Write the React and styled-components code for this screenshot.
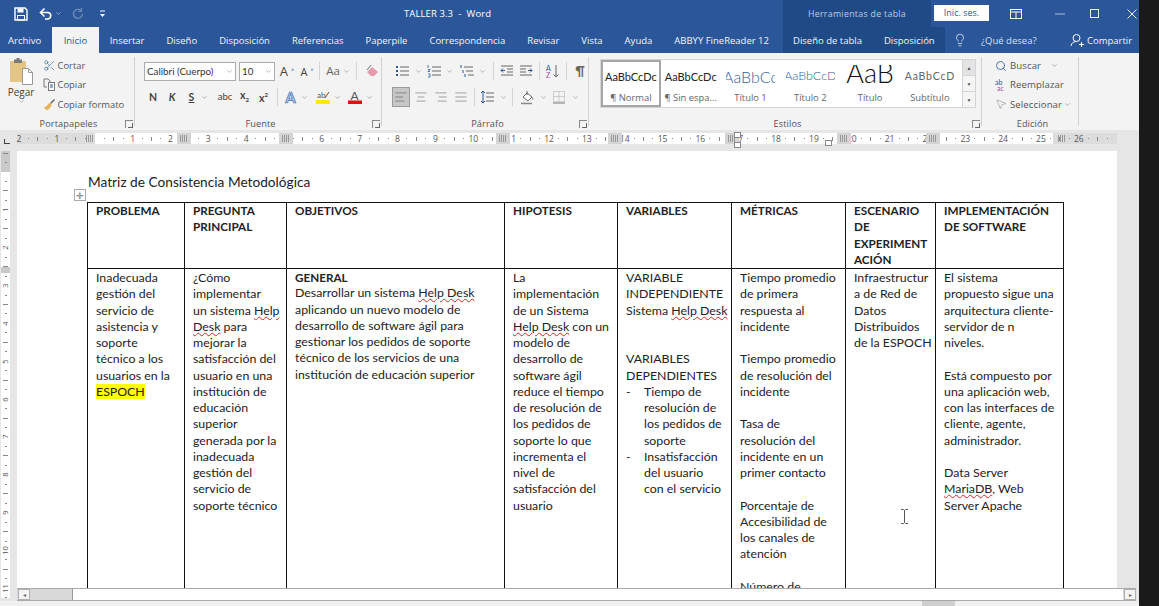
import React from 'react';
import styled, { createGlobalStyle } from 'styled-components';
import { ChevronDown, Scissors, AlignLeft, AlignCenter, AlignRight, AlignJustify, Lightbulb, Search, MousePointer2 } from 'lucide-react';

const Global = createGlobalStyle`
  html, body { margin: 0; padding: 0; height: 100%; background: #1a1a1a; overflow: hidden; }
  #root { height: 100%; }
  * { box-sizing: border-box; }
`;
const UI = `"Open Sans", "Noto Sans", sans-serif`;
const DOC = `Lato, "Liberation Sans", sans-serif`;

const Screen = styled.div`display:flex;width:1159px;height:606px;background:#1a1a1a;overflow:hidden;`;
const Word = styled.div`display:flex;flex-direction:column;width:1139px;height:606px;background:#e6e6e6;`;

/* title bar */
const TitleBar = styled.div`display:flex;align-items:center;height:27px;background:#2b579a;color:#fff;font:9.5px ${UI};flex:none;`;
const Qat = styled.div`display:flex;align-items:center;width:404px;flex:none;padding-left:14px;`;
const QatBtn = styled.span`display:flex;align-items:center;justify-content:center;width:${p=>p.$w||14}px;margin-right:${p=>p.$mr||0}px;opacity:${p=>p.$dim?.3:1};`;
const DocName = styled.div`width:379px;flex:none;letter-spacing:.1px;`;
const ContextHead = styled.div`width:148px;height:27px;flex:none;background:#204a85;color:#b9cbe6;display:flex;align-items:center;justify-content:center;font-size:8.8px;letter-spacing:.3px;`;
const SignIn = styled.div`width:55px;height:16px;margin:0 0 2px 3px;background:#fff;color:#2b579a;display:flex;align-items:center;justify-content:center;font-size:9px;flex:none;`;
const WinBtn = styled.span`display:flex;align-items:center;justify-content:center;width:${p=>p.$w}px;flex:none;`;

/* tabs */
const TabRow = styled.div`display:flex;align-items:stretch;height:26px;background:#2b579a;color:#f1f4f9;font:9.5px ${UI};flex:none;`;
const MainTabs = styled.div`display:flex;width:783px;flex:none;`;
const Tab = styled.div`display:flex;align-items:center;padding:0 ${p=>p.$px??11}px 0 ${p=>p.$pl??p.$px??11}px;white-space:nowrap;flex:none;
  ${p=>p.$active?'background:#f3f3f3;color:#2b579a;':''}`;
const ContextTabs = styled.div`display:flex;width:162px;flex:none;background:#204a85;padding-left:10px;gap:22px;align-items:center;`;
const TabText = styled.span`white-space:nowrap;`;
const Help = styled.div`display:flex;align-items:center;gap:14px;padding-left:8px;width:125px;flex:none;color:#d5e0f0;`;
const Share = styled.div`display:flex;align-items:center;gap:3px;flex:none;`;

/* ribbon */
const Ribbon = styled.div`display:flex;height:77px;background:#f3f3f3;flex:none;color:#444;font:9.5px ${UI};`;
const Group = styled.section`position:relative;display:flex;flex-direction:column;width:${p=>p.$w}px;flex:none;`;
const GroupBody = styled.div`flex:1;display:flex;min-height:0;position:relative;&::after{content:'';position:absolute;right:2px;top:4px;bottom:-8px;width:1px;background:#d2d2d2;}`;
const GroupLabel = styled.div`height:11px;line-height:11px;text-align:center;font-size:9.2px;color:#555;letter-spacing:.1px;margin-bottom:1px;`;
const Launcher = styled.span`position:absolute;right:4px;bottom:2px;width:8px;height:8px;border:1px solid #888;border-width:1px 0 0 1px;&::after{content:'';position:absolute;right:0;bottom:0;width:4px;height:4px;border-right:1px solid #666;border-bottom:1px solid #666;}`;
const PasteBtn = styled.div`width:42px;display:flex;flex-direction:column;align-items:center;padding-top:5px;font-size:10px;color:#444;flex:none;`;
const PasteLabel = styled.span`margin-top:1px;line-height:12px;`;
const ClipList = styled.div`display:flex;flex-direction:column;padding-top:3px;`;
const PadList = styled(ClipList)`padding-left:10px;`;
const ClipRow = styled.div`display:flex;align-items:center;gap:1.5px;height:19.3px;white-space:nowrap;color:#555;font-size:9.4px;`;
const ClipIcon = styled.span`display:flex;width:14px;justify-content:center;`;
const Stack = styled.div`display:flex;flex-direction:column;padding:${p=>p.$pt??8}px 0 0 ${p=>p.$pl||0}px;gap:${p=>p.$gap??5}px;`;
const Row = styled.div`display:flex;align-items:center;height:20px;`;
const Combo = styled.div`display:flex;align-items:center;justify-content:space-between;width:${p=>p.$w}px;height:19px;margin-right:${p=>p.$mr||0}px;background:#fff;border:1px solid #ababab;padding:0 2px 0 2px;font:9.8px ${DOC};color:#333;white-space:nowrap;flex:none;overflow:hidden;`;
const Tool = styled.span`display:flex;align-items:center;justify-content:center;gap:${p=>p.$gap??3}px;width:${p=>p.$w||20}px;height:${p=>p.$h||20}px;margin-left:${p=>p.$ml||0}px;flex:none;color:#555;font-family:${DOC};${p=>p.$on?'background:#c6c6c6;border:1px solid #9a9a9a;':''}`;
const Glyph = styled.span`font:${p=>p.$b?'700':'400'} ${p=>p.$s||10}px/1 ${p=>p.$f||DOC};color:${p=>p.$c||'#444'};${p=>p.$i?'font-style:italic;':''}${p=>p.$u?'text-decoration:underline;':''}`;
const OutlineA = styled(Glyph)`-webkit-text-stroke:.7px #3f74b5;`;
const Sub = styled.span`font-size:6px;vertical-align:${p=>p.$up?'super':'sub'};`;
const VSep = styled.span`display:block;width:1px;height:18px;background:#d4d4d4;flex:none;margin:0 ${p=>p.$mx??2}px;`;
const Chev = styled(ChevronDown).attrs({ size: 7, strokeWidth: 1.6 })`color:#666;flex:none;margin-left:${p=>p.$ml||0}px;`;
const Gallery = styled.div`display:flex;margin:6px 0 0 9px;width:376px;height:49px;background:#fff;border:1px solid #d4d4d4;flex:none;`;
const StyleItem = styled.div`display:flex;flex-direction:column;align-items:center;width:59.8px;flex:none;overflow:hidden;${p=>p.$sel?'border:2px solid #a6a6a6;box-shadow:inset 0 0 0 1px #fff;':'padding:2px 0;'}`;
const Preview = styled.div`height:29px;display:flex;align-items:center;justify-content:center;width:${p=>p.$clip||53}px;overflow:hidden;white-space:nowrap;font:${p=>p.$w||400} ${p=>p.$s||11}px/1 ${DOC};color:${p=>p.$c||'#222'};letter-spacing:${p=>p.$ls||0}px;
  ${p=>p.$big?'align-items:flex-end;height:21px;margin:3px 0 5px;':''}`;
const StyleName = styled.div`font-size:9.4px;line-height:14px;color:#666;white-space:nowrap;`;
const GalleryScroll = styled.div`display:flex;flex-direction:column;width:13px;margin-left:auto;border-left:1px solid #d4d4d4;`;
const ScrollCell = styled.span`flex:1;display:flex;align-items:center;justify-content:center;background:${p=>p.$dim?'#e3e3e3':'#f5f5f5'};border-bottom:1px solid #d4d4d4;font-size:5px;color:#555;&:last-child{border-bottom:0;}`;
const EditRow = styled.div`display:flex;align-items:center;gap:2px;height:19.3px;color:#555;white-space:nowrap;font-size:9.6px;letter-spacing:.1px;`;

/* ruler */
const RulerBar = styled.div`position:relative;height:21px;flex:none;background:#e6e6e6;`;
const CornerTab = styled.span`position:absolute;left:4px;top:9px;width:6px;height:5px;border-left:1.5px solid #444;border-bottom:1.5px solid #444;`;
const RulerTrack = styled.div`position:absolute;left:17px;top:3px;width:1100px;height:11px;background:#fff;overflow:visible;`;
const RulerShade = styled.span`position:absolute;top:0;bottom:0;left:${p=>p.$l}px;width:${p=>p.$w}px;background:${p=>p.$c||'#dcdcdc'};`;
const RulerGrip = styled.span`position:absolute;top:2px;height:7px;left:${p=>p.$l}px;width:7px;background:repeating-linear-gradient(90deg,#999 0 1px,transparent 1px 2px);`;
const RulerCells = styled.div`position:absolute;left:-2.7px;top:0;display:flex;height:11px;`;
const RulerCell = styled.span`display:grid;grid-template-columns:repeat(4,1fr);align-items:center;justify-items:center;width:37.85px;flex:none;font:8.5px ${UI};color:#555;`;
const RulerNum = styled.span`white-space:nowrap;line-height:11px;`;
const Dot = styled.i`display:block;width:${p=>p.$wd||1}px;height:${p=>p.$h||1}px;background:#888;`;
const Indent = styled.span`position:absolute;left:${p=>p.$l}px;top:${p=>p.$t}px;width:7px;height:${p=>p.$h}px;background:#fff;border:1px solid #888;`;

/* document */
const DocArea = styled.div`display:flex;flex:1;min-height:0;overflow:hidden;`;
const VRuler = styled.div`width:17px;flex:none;overflow:hidden;padding:0 7px 3px 1px;`;
const VTrack = styled.div`position:relative;height:100%;background:#fff;overflow:hidden;`;
const VShade = styled.span`position:absolute;left:0;right:0;top:${p=>p.$t}px;height:${p=>p.$h}px;background:#c9c9c9;`;
const VCells = styled.div`position:absolute;left:0;top:-21.55px;width:100%;display:flex;flex-direction:column;`;
const VCell = styled.span`height:37.85px;display:grid;grid-template-rows:repeat(4,1fr);align-items:center;justify-items:center;font:7.5px ${UI};color:#555;flex:none;`;
const VNum = styled.span`transform:rotate(-90deg);line-height:9px;white-space:nowrap;`;
const DocColumn = styled.div`display:flex;flex-direction:column;flex:1;min-width:0;`;
const Page = styled.div`position:relative;width:1100px;flex:1;min-height:0;background:#fff;padding:23px 0 0 70px;overflow:hidden;font:12.35px/16.25px ${DOC};color:#222;`;
const DocTitle = styled.div`font-size:13.7px;line-height:16px;margin:0 0 12px 1px;`;
const Grid = styled.table`position:relative;border-collapse:collapse;table-layout:fixed;width:976px;`;
const HeadRow = styled.tr`height:66px;`;
const BodyRow = styled.tr`height:420px;`;
const Cell = styled.td`border:1px solid #111;vertical-align:top;padding:1px 0 0 8px;overflow:hidden;`;
const HeadCell = styled(Cell)`padding-top:0;`;
const BoldLine = styled.div`font-weight:700;font-size:11.7px;white-space:nowrap;&:first-child{margin-top:-1px;}`;
const Line = styled.div`white-space:nowrap;min-height:16.25px;`;
const ListLine = styled.div`white-space:nowrap;display:flex;height:16.25px;`;
const Dash = styled.span`width:18px;flex:none;`;
const Spell = styled.span`text-decoration:underline wavy #d22;text-decoration-thickness:1px;text-underline-offset:1px;`;
const Mark = styled.span`background:#ffff00;`;
const MoveHandle = styled.span`position:absolute;left:57px;top:38px;width:12px;height:12px;border:1px solid #aaa;display:flex;align-items:center;justify-content:center;color:#666;font:9px/1 ${UI};background:#fff;`;
const IBeam = styled.span`position:absolute;left:883px;top:358px;color:#555;`;

/* scrollbar + status */
const HScroll = styled.div`display:flex;align-items:center;width:1119px;height:13px;flex:none;background:#d9d9d9;border-top:1px solid #a9a9a9;border-bottom:1px solid #a9a9a9;`;
const ArrowBtn = styled.span`display:flex;align-items:center;justify-content:center;width:12px;height:11px;margin:0 1px;background:#f5f5f5;border:1px solid #b0b0b0;font-size:6px;color:#666;flex:none;`;
const Thumb = styled.span`flex:none;height:11px;width:1051px;margin-left:41px;background:#fff;border-left:1px solid #999;`;
const Status = styled.div`display:flex;flex:none;height:5px;background:#f0f0f0;padding-left:922px;`;
const ViewBtn = styled.span`width:33px;height:5px;background:#cfcfcf;`;

const Sv = ({ s = 14, w, h, children, ...r }) => <svg width={w || s} height={h || s} viewBox={`0 0 ${w || s} ${h || s}`} fill="none" {...r}>{children}</svg>;

const cols = [97, 102, 218, 113, 114, 114, 90, 128];
const Rows = ({ items }) => items.map((l, i) => <Line key={i}>{l || '\u00a0'}</Line>);
const HelpDesk = <Spell>Help Desk</Spell>;

const rulerNums = ['2','1','','1','2','3','4','','6','7','8','9','10','11','12','13','14','15','16','17','18','19','20','21','22','23','24','25','26'];
const grips = [160, 262, 479, 591, 708, 820, 909];
const vNums = ['','','1','2','3','4','5','6','7','8','9','10','11',''];

export default function App() {
  return (
    <Screen>
      <Global />
      <Word>
        <TitleBar>
          <Qat>
            <QatBtn $w={14} $mr={11}><Sv s={14}><path d="M1 1h10l2 2v10H1z" stroke="#fff" strokeWidth="1.4"/><rect x="3.5" y="1.5" width="6" height="4" fill="#fff"/><rect x="3.5" y="8.5" width="7" height="4.5" stroke="#fff"/></Sv></QatBtn>
            <QatBtn $w={14} $mr={1}><Sv s={14}><path d="M2 5.5h6.5a3.2 3.2 0 0 1 0 6.5H6" stroke="#fff" strokeWidth="1.6"/><path d="M5.5 1.5 1.5 5.5l4 4" stroke="#fff" strokeWidth="1.6"/></Sv></QatBtn>
            <QatBtn $w={8} $mr={10}><Chev color="#fff" /></QatBtn>
            <QatBtn $w={12} $mr={14} $dim><Sv s={12}><path d="M9 2.5A4.5 4.5 0 1 0 10.5 6" stroke="#fff" strokeWidth="1.4"/><path d="M9.5 0v3.5H6" stroke="#fff" strokeWidth="1.2"/></Sv></QatBtn>
            <QatBtn $w={8}><Sv w={7} h={8}><path d="M1 1h5" stroke="#fff"/><path d="M1 4h5L3.5 7z" fill="#fff"/></Sv></QatBtn>
          </Qat>
          <DocName>TALLER 3.3&nbsp; -&nbsp; Word</DocName>
          <ContextHead>Herramientas de tabla</ContextHead>
          <SignIn>Inic. ses.</SignIn>
          <WinBtn $w={54}><Sv w={12} h={10}><rect x=".5" y=".5" width="11" height="9" stroke="#fff"/><path d="M.5 3h11M6 3v6" stroke="#fff"/></Sv></WinBtn>
          <WinBtn $w={34}><Sv w={10} h={2}><path d="M0 1h10" stroke="#a9bddb"/></Sv></WinBtn>
          <WinBtn $w={34}><Sv w={9} h={9}><rect x=".5" y=".5" width="8" height="8" stroke="#e8eef7"/></Sv></WinBtn>
          <WinBtn $w={42}><Sv s={10}><path d="M.5.5l9 9M9.5.5l-9 9" stroke="#e8eef7"/></Sv></WinBtn>
        </TitleBar>

        <TabRow>
          <MainTabs>
            <Tab $pl={8}>Archivo</Tab>
            <Tab $active $px={11.5}>Inicio</Tab>
            <Tab>Insertar</Tab>
            <Tab>Diseño</Tab>
            <Tab>Disposición</Tab>
            <Tab>Referencias</Tab>
            <Tab>Paperpile</Tab>
            <Tab>Correspondencia</Tab>
            <Tab>Revisar</Tab>
            <Tab>Vista</Tab>
            <Tab>Ayuda</Tab>
            <Tab>ABBYY FineReader 12</Tab>
          </MainTabs>
          <ContextTabs><TabText>Diseño de tabla</TabText><TabText>Disposición</TabText></ContextTabs>
          <Help><Lightbulb size={14} strokeWidth={1.2} color="#fff" /><TabText>¿Qué desea?</TabText></Help>
          <Share>
            <Sv s={14}><circle cx="6.5" cy="5" r="3.5" stroke="#fff"/><path d="M1 13c.5-3 2.5-4.5 5.5-4.5M9 11.5h5M11.5 9v5" stroke="#fff"/></Sv>
            <TabText>Compartir</TabText>
          </Share>
        </TabRow>

        <Ribbon>
          <Group $w={137}>
            <GroupBody>
              <PasteBtn>
                <Sv w={24} h={27}>
                  <rect x="1" y="3" width="16" height="21" rx="1" fill="#e5c585"/>
                  <path d="M5 3V1.5h2.5V0h3v1.5H13V3v2H5z" fill="#7c7c7c"/>
                  <path d="M13.5 10.5h6l4 4v12h-10z" fill="#fff" stroke="#999"/>
                  <path d="M19.5 10.5v4h4" stroke="#999"/>
                </Sv>
                <PasteLabel>Pegar</PasteLabel>
                <Chev />
              </PasteBtn>
              <ClipList>
                <ClipRow><ClipIcon><Scissors size={13} strokeWidth={1.2} color="#3a6ea5" /></ClipIcon>Cortar</ClipRow>
                <ClipRow><ClipIcon><Sv s={13}><path d="M1 1h4l2 2v2M1 1v8h3" stroke="#777"/><rect x="5.5" y="4.5" width="6" height="8" fill="#fff" stroke="#777"/><path d="M7 7h3M7 9h3" stroke="#2b579a"/></Sv></ClipIcon>Copiar</ClipRow>
                <ClipRow><ClipIcon><Sv s={14}><path d="M8 6l4-4 1 1-4 4z" fill="#666"/><path d="M2 10c3 0 4-3 5-4l3 2c-1 1-3 5-5 5-2 0-2-2-3-3z" fill="#e3b35e"/></Sv></ClipIcon>Copiar formato</ClipRow>
              </ClipList>
            </GroupBody>
            <GroupLabel>Portapapeles<Launcher /></GroupLabel>
          </Group>

          <Group $w={247}>
            <GroupBody>
              <Stack $pl={7} $pt={8} $gap={6}>
                <Row>
                  <Combo $w={92} $mr={3}>Calibri (Cuerpo)<Chev /></Combo>
                  <Combo $w={36} $mr={2}>10<Chev /></Combo>
                  <Tool><Glyph $s={13} $f={UI}>A</Glyph><Glyph $s={7} $c="#2b579a">˄</Glyph></Tool>
                  <Tool><Glyph $s={11} $f={UI}>A</Glyph><Glyph $s={7} $c="#2b579a">˅</Glyph></Tool>
                  <VSep />
                  <Tool $w={32}><Glyph $s={11.5} $f={UI} $c="#666">Aa</Glyph><Chev /></Tool>
                  <VSep />
                  <Tool $w={26}><Sv s={14}><path d="M7 3l6 5-4 4H6L2 8z" fill="#e69aa9"/><path d="M2 6l4-5" stroke="#777"/></Sv></Tool>
                </Row>
                <Row>
                  <Tool $w={18}><Glyph $b $s={10.5}>N</Glyph></Tool>
                  <Tool><Glyph $b $i $s={10.5}>K</Glyph></Tool>
                  <Tool $w={33} $gap={7}><Glyph $b $u $s={10.5}>S</Glyph><Chev /></Tool>
                  <Tool><Glyph $s={9.5}>abc</Glyph></Tool>
                  <Tool $w={19}><Glyph $b $s={10.5}>x<Sub>2</Sub></Glyph></Tool>
                  <Tool $w={19}><Glyph $b $s={10.5}>x<Sub $up>2</Sub></Glyph></Tool>
                  <VSep $mx={3.5} />
                  <Tool $w={31} $gap={5}><OutlineA $b $s={15} $c="#bdd3ee">A</OutlineA><Chev /></Tool>
                  <Tool $w={32} $gap={3}><Sv w={15} h={14}><text x="1" y="8" fontSize="8" fill="#555" fontFamily="Lato">ab</text><path d="M9 8l4-6" stroke="#555"/><rect x="0" y="10" width="14" height="4" fill="#ffea00"/></Sv><Chev /></Tool>
                  <Tool $w={32} $gap={4}><Sv w={14} h={14}><text x="2.5" y="9.5" fontSize="12" fill="#555" fontFamily="Lato">A</text><rect x="0" y="10.5" width="14" height="3.5" fill="#e01010"/></Sv><Chev /></Tool>
                </Row>
              </Stack>
            </GroupBody>
            <GroupLabel>Fuente<Launcher /></GroupLabel>
          </Group>

          <Group $w={207}>
            <GroupBody>
              <Stack $pl={8} $pt={8} $gap={6}>
                <Row>
                  <Tool $w={32} $gap={6}><Sv s={14}><path d="M5 3h9M5 7h9M5 11h9" stroke="#666"/><path d="M1 2h2v2H1zM1 6h2v2H1zM1 10h2v2H1z" fill="#2b579a"/></Sv><Chev /></Tool>
                  <Tool $w={32} $gap={5}><Sv s={14}><path d="M5 3h9M5 7h9M5 11h9" stroke="#666"/><path d="M1 1v3M1 5.5h2l-2 2h2M1 10h2v3H1" stroke="#2b579a" strokeWidth=".8"/></Sv><Chev /></Tool>
                  <Tool $w={34} $gap={5}><Sv s={14}><path d="M4 3h9M6 7h7M8 11h6" stroke="#666"/><path d="M1 1v3M3 6v3M5 10v3" stroke="#2b579a"/></Sv><Chev /></Tool>
                  <VSep $mx={3} />
                  <Tool $w={19}><Sv s={14}><path d="M1 2h12M7 5h6M7 8h6M1 11h12" stroke="#666"/><path d="M5 6.5H1M3 4.5l-2 2 2 2" stroke="#2b579a"/></Sv></Tool>
                  <Tool $w={20}><Sv s={14}><path d="M1 2h12M1 5h6M1 8h6M1 11h12" stroke="#666"/><path d="M9 6.5h4M11 4.5l2 2-2 2" stroke="#2b579a"/></Sv></Tool>
                  <VSep $mx={3} />
                  <Tool $w={20}><Sv s={14}><text x="0" y="6.5" fontSize="7" fill="#2b579a" fontFamily="Lato">A</text><text x="0" y="13.5" fontSize="7" fill="#a349a4" fontFamily="Lato">Z</text><path d="M10 1v12M7.5 10.5 10 13l2.5-2.5" stroke="#666"/></Sv></Tool>
                  <VSep $mx={3} />
                  <Tool $w={20}><Glyph $s={13} $c="#666" $b>¶</Glyph></Tool>
                </Row>
                <Row>
                  <Tool $w={18} $h={20} $on><AlignLeft size={14} strokeWidth={1} color="#555" /></Tool>
                  <Tool $w={20} $ml={1}><AlignCenter size={14} strokeWidth={1} color="#666" /></Tool>
                  <Tool $w={20}><AlignRight size={14} strokeWidth={1} color="#666" /></Tool>
                  <Tool $w={20}><AlignJustify size={14} strokeWidth={1} color="#666" /></Tool>
                  <VSep $mx={3} />
                  <Tool $w={31} $gap={6}><Sv s={14}><path d="M6 3h8M6 7h8M6 11h8" stroke="#666"/><path d="M3 1v12M1 3l2-2 2 2M1 11l2 2 2-2" stroke="#2b579a"/></Sv><Chev /></Tool>
                  <VSep $mx={3} />
                  <Tool $w={34} $gap={5}><Sv s={15}><path d="M3 7l4-4 5 4-4 4z" stroke="#666" fill="#fff"/><path d="M7 1v4" stroke="#666"/><path d="M12 7c1.5 1 1.5 3 1 3s-1-2-1-3z" fill="#666"/><path d="M1 13.5h11" stroke="#888" strokeWidth="1.5"/></Sv><Chev /></Tool>
                  <Tool $w={30} $gap={6}><Sv s={14}><path d="M1.5 1.5h11v10h-11zM7 1.5v10M1.5 6.5h11" stroke="#aaa" strokeDasharray="1 1"/><path d="M1 13h12" stroke="#777"/></Sv><Chev /></Tool>
                </Row>
              </Stack>
            </GroupBody>
            <GroupLabel>Párrafo<Launcher /></GroupLabel>
          </Group>

          <Group $w={393}>
            <GroupBody>
              <Gallery>
                <StyleItem $sel><Preview>AaBbCcDc</Preview><StyleName>¶ Normal</StyleName></StyleItem>
                <StyleItem><Preview>AaBbCcDc</Preview><StyleName>¶ Sin espa...</StyleName></StyleItem>
                <StyleItem><Preview $clip={49} $s={16} $w={300} $c="#2f5f97">AaBbCc</Preview><StyleName>Título 1</StyleName></StyleItem>
                <StyleItem><Preview $clip={49} $s={12.5} $w={300} $c="#2f5f97">AaBbCcD</Preview><StyleName>Título 2</StyleName></StyleItem>
                <StyleItem><Preview $big $s={27} $w={300} $c="#111">AaB</Preview><StyleName>Título</StyleName></StyleItem>
                <StyleItem><Preview $s={10.5} $c="#666" $ls={.8}>AaBbCcD</Preview><StyleName>Subtítulo</StyleName></StyleItem>
                <GalleryScroll><ScrollCell $dim>▲</ScrollCell><ScrollCell>▼</ScrollCell><ScrollCell>▼</ScrollCell></GalleryScroll>
              </Gallery>
            </GroupBody>
            <GroupLabel>Estilos<Launcher /></GroupLabel>
          </Group>

          <Group $w={97}>
            <GroupBody>
              <PadList>
                <EditRow><ClipIcon><Search size={12} strokeWidth={1.6} color="#2b579a" /></ClipIcon>Buscar<Chev $ml={8} /></EditRow>
                <EditRow><ClipIcon><Sv s={14}><text x="1" y="6.5" fontSize="7" fill="#2b579a" fontFamily="Lato">ab</text><text x="3" y="13" fontSize="7" fill="#a349a4" fontFamily="Lato">ac</text></Sv></ClipIcon>Reemplazar</EditRow>
                <EditRow><ClipIcon><MousePointer2 size={12} strokeWidth={1} color="#777" /></ClipIcon>Seleccionar<Chev /></EditRow>
              </PadList>
            </GroupBody>
            <GroupLabel>Edición</GroupLabel>
          </Group>
        </Ribbon>

        <RulerBar>
          <CornerTab />
          <RulerTrack>
            <RulerShade $l={0} $w={78} />
            <RulerShade $l={1036} $w={64} />
            <RulerCells>
              {rulerNums.map((n, i) => (
                <RulerCell key={i}><RulerNum>{n}</RulerNum><Dot /><Dot $h={4} /><Dot /></RulerCell>
              ))}
            </RulerCells>
            {grips.map((l) => <RulerShade key={l} $l={l} $w={14} $c="#d4d4d4" />)}
            {[66, ...grips, 1038].map((l) => <RulerGrip key={l} $l={l + 3} />)}
            <Indent $l={717} $t={-1} $h={6} />
            <Indent $l={717} $t={9} $h={6} />
            <Indent $l={808} $t={7} $h={6} />
          </RulerTrack>
        </RulerBar>

        <DocArea>
          <VRuler>
            <VTrack>
              <VShade $t={0} $h={21} />
              <VShade $t={116} $h={6} />
              <VCells>
                {vNums.map((n, i) => (
                  <VCell key={i}><VNum>{n}</VNum><Dot $wd={2} /><Dot $wd={5} /><Dot $wd={2} /></VCell>
                ))}
              </VCells>
            </VTrack>
          </VRuler>
          <DocColumn>
            <Page>
              <DocTitle>Matriz de Consistencia Metodológica</DocTitle>
              <MoveHandle>✛</MoveHandle>
              <Grid>
                <colgroup>{cols.map((w, i) => <col key={i} style={{ width: w }} />)}</colgroup>
                <tbody>
                  <HeadRow>
                    <HeadCell><BoldLine>PROBLEMA</BoldLine></HeadCell>
                    <HeadCell><BoldLine>PREGUNTA</BoldLine><BoldLine>PRINCIPAL</BoldLine></HeadCell>
                    <HeadCell><BoldLine>OBJETIVOS</BoldLine></HeadCell>
                    <HeadCell><BoldLine>HIPOTESIS</BoldLine></HeadCell>
                    <HeadCell><BoldLine>VARIABLES</BoldLine></HeadCell>
                    <HeadCell><BoldLine>MÉTRICAS</BoldLine></HeadCell>
                    <HeadCell><BoldLine>ESCENARIO</BoldLine><BoldLine>DE</BoldLine><BoldLine>EXPERIMENT</BoldLine><BoldLine>ACIÓN</BoldLine></HeadCell>
                    <HeadCell><BoldLine>IMPLEMENTACIÓN</BoldLine><BoldLine>DE SOFTWARE</BoldLine></HeadCell>
                  </HeadRow>
                  <BodyRow>
                    <Cell><Rows items={['Inadecuada','gestión del','servicio de','asistencia y','soporte','técnico a los','usuarios en la',<Mark>ESPOCH</Mark>]} /></Cell>
                    <Cell><Rows items={['¿Cómo','implementar',<>un sistema <Spell>Help</Spell></>,<><Spell>Desk</Spell> para</>,'mejorar la','satisfacción del','usuario en una','institución de','educación','superior','generada por la','inadecuada','gestión del','servicio de','soporte técnico']} /></Cell>
                    <Cell>
                      <BoldLine>GENERAL</BoldLine>
                      <Rows items={[<>Desarrollar un sistema {HelpDesk}</>,'aplicando un nuevo modelo de','desarrollo de software ágil para','gestionar los pedidos de soporte','técnico de los servicios de una','institución de educación superior']} />
                    </Cell>
                    <Cell><Rows items={['La','implementación','de un Sistema',<>{HelpDesk} con un</>,'modelo de','desarrollo de','software ágil','reduce el tiempo','de resolución de','los pedidos de','soporte lo que','incrementa el','nivel de','satisfacción del','usuario']} /></Cell>
                    <Cell>
                      <Rows items={['VARIABLE','INDEPENDIENTE',<>Sistema {HelpDesk}</>,'','','VARIABLES','DEPENDIENTES']} />
                      <ListLine><Dash>-</Dash>Tiempo de</ListLine>
                      <ListLine><Dash />resolución de</ListLine>
                      <ListLine><Dash />los pedidos de</ListLine>
                      <ListLine><Dash />soporte</ListLine>
                      <ListLine><Dash>-</Dash>Insatisfacción</ListLine>
                      <ListLine><Dash />del usuario</ListLine>
                      <ListLine><Dash />con el servicio</ListLine>
                    </Cell>
                    <Cell><Rows items={['Tiempo promedio','de primera','respuesta al','incidente','','Tiempo promedio','de resolución del','incidente','','Tasa de','resolución del','incidente en un','primer contacto','','Porcentaje de','Accesibilidad de','los canales de','atención','','Número de']} /></Cell>
                    <Cell><Rows items={['Infraestructur','a de Red de','Datos','Distribuidos','de la ESPOCH']} /></Cell>
                    <Cell><Rows items={['El sistema','propuesto sigue una','arquitectura cliente-','servidor de n','niveles.','','Está compuesto por','una aplicación web,','con las interfaces de','cliente, agente,','administrador.','','Data Server',<><Spell>MariaDB</Spell>, Web</>,'Server Apache']} /></Cell>
                  </BodyRow>
                </tbody>
              </Grid>
              <IBeam><Sv w={9} h={15}><path d="M1 .5h2.5L4.5 1.5 5.5.5H8M4.5 1.5v12M1 14.5h2.5l1-1 1 1H8" stroke="#555"/></Sv></IBeam>
            </Page>
            <HScroll>
              <ArrowBtn>◂</ArrowBtn>
              <Thumb />
              <ArrowBtn>▸</ArrowBtn>
            </HScroll>
          </DocColumn>
        </DocArea>
        <Status><ViewBtn /></Status>
      </Word>
    </Screen>
  );
}
